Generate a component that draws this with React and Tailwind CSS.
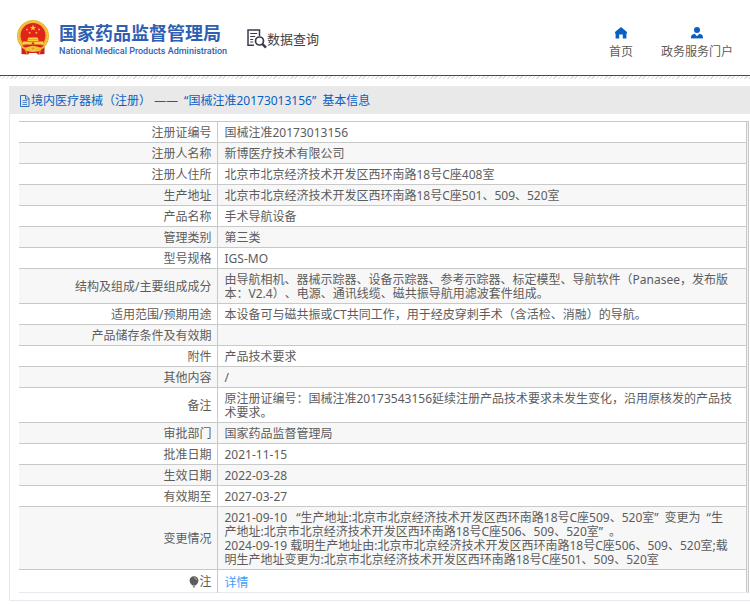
import React from 'react'

// \u2002 sets the curly quotes off from the characters next to them
const title = '境内医疗器械（注册） ——\u2002“国械注准20173013156”\u2002基本信息'

const rows = [
  { label: '注册证编号', value: '国械注准20173013156' },
  { label: '注册人名称', value: '新博医疗技术有限公司' },
  { label: '注册人住所', value: '北京市北京经济技术开发区西环南路18号C座408室' },
  { label: '生产地址', value: '北京市北京经济技术开发区西环南路18号C座501、509、520室' },
  { label: '产品名称', value: '手术导航设备' },
  { label: '管理类别', value: '第三类' },
  { label: '型号规格', value: 'IGS-MO' },
  {
    label: '结构及组成/主要组成成分',
    value: '由导航相机、器械示踪器、设备示踪器、参考示踪器、标定模型、导航软件（Panasee，发布版本：V2.4）、电源、通讯线缆、磁共振导航用滤波套件组成。',
  },
  { label: '适用范围/预期用途', value: '本设备可与磁共振或CT共同工作，用于经皮穿刺手术（含活检、消融）的导航。' },
  { label: '产品储存条件及有效期', value: '' },
  { label: '附件', value: '产品技术要求' },
  { label: '其他内容', value: '/' },
  { label: '备注', value: '原注册证编号：国械注准20173543156延续注册产品技术要求未发生变化，沿用原核发的产品技术要求。' },
  { label: '审批部门', value: '国家药品监督管理局' },
  { label: '批准日期', value: '2021-11-15' },
  { label: '生效日期', value: '2022-03-28' },
  { label: '有效期至', value: '2027-03-27' },
  {
    label: '变更情况',
    value:
      '2021-09-10 \u2002“生产地址:北京市北京经济技术开发区西环南路18号C座509、520室”\u2002变更为\u2002“生产地址:北京市北京经济技术开发区西环南路18号C座506、509、520室”\u2002。\n2024-09-19 载明生产地址由:北京市北京经济技术开发区西环南路18号C座506、509、520室;载明生产地址变更为:北京市北京经济技术开发区西环南路18号C座501、509、520室',
  },
]

const Emblem = () => (
  <svg width="32" height="35" viewBox="0 0 32 35" aria-hidden="true">
    <path d="M4.500 23 L4.500 34 L11 34.500 L12.500 33 L19.500 33 L21 34.500 L27.500 34 L27.500 23 Z" fill="#d2201c" />
    <circle cx="16" cy="16" r="16" fill="#e9b62f" />
    <circle cx="16" cy="16" r="14.400" fill="none" stroke="#f7d768" strokeWidth="1" strokeDasharray="2 1" />
    <circle cx="16" cy="15.500" r="12.400" fill="#e2231a" />
    <path d="M16 4.600l.8 2.300h2.400l-1.900 1.400.7 2.300-2-1.400-2 1.400.7-2.300-1.900-1.400h2.400z" fill="#f8cf3e" />
    <g fill="#f3b632">
      <circle cx="10" cy="9.500" r="1" />
      <circle cx="22" cy="9.500" r="1" />
      <circle cx="12.600" cy="12.800" r="1" />
      <circle cx="19.400" cy="12.800" r="1" />
    </g>
    <path d="M11.500 17.400h9l1 1.800h-11z M10.500 19.600h11v1.400h-11z M6 21.400h20v3H6z" fill="#f8cf3e" />
    <path d="M14.800 22.600h2.400v1.800h-2.400z" fill="#e2231a" />
    <path d="M5 25.200h22l-2.500 2.300h-17z" fill="#d2201c" />
    <path d="M8 28 Q16 24 24 28 L22 31.500 Q16 29.500 10 31.500 Z" fill="#f0c03a" />
    <circle cx="16" cy="28.500" r="2.800" fill="#f3c43c" />
    <circle cx="16" cy="28.500" r="1.200" fill="#e09a28" />
    <path d="M8 29l2 5M24 29l-2 5" stroke="#f0b63a" strokeWidth=".8" />
  </svg>
)

const QueryIcon = () => (
  <svg width="20" height="20" viewBox="0 0 20 20" fill="none" stroke="#3b3b4f" aria-hidden="true">
    <path d="M7 16.200H1V1h11.500v6" strokeWidth="1.500" />
    <path d="M3.200 4.500h7M3.200 7.500h5M3.200 10.500h3M3.200 13h3" strokeWidth="1" />
    <circle cx="12.500" cy="12" r="4" strokeWidth="1.700" />
    <path d="M15.500 15.200l3.500 3.500" strokeWidth="2.400" />
  </svg>
)

const HomeIcon = () => (
  <svg width="12" height="12" viewBox="0 0 12 12" fill="#0a5fc4" aria-hidden="true">
    <path d="M6 0L0 5v1.500h.6V11.500h3.600V7.500h3.600v4h3.600V6.500H12V5z" />
  </svg>
)

const UserIcon = () => (
  <svg width="12" height="12" viewBox="0 0 12 12" aria-hidden="true">
    <g fill="#0a5fc4">
      <circle cx="6" cy="3" r="3" />
      <path d="M0 11V10Q.4 7.200 3.600 6.700L6 9.200 8.400 6.700Q11.600 7.200 12 10v1z" />
    </g>
    <path d="M0 11h12v1H0z" fill="#9dbfe6" />
  </svg>
)

const FileIcon = () => (
  <svg width="12" height="12" viewBox="0 0 12 12" fill="none" stroke="#2c6fc2" aria-hidden="true">
    <path d="M1.500 .5h5.500l3 3v8h-8.500z M6.500 .5v3.500h3.500" />
    <path d="M3.500 5.500h4.500M3.500 7.500h4.500M3.500 9.500h4.500" strokeWidth=".8" />
  </svg>
)

const BulbIcon = () => (
  <svg width="10" height="12" viewBox="0 0 10 12" aria-hidden="true">
    <path d="M5 .3C2.300.3.600 2.200.600 4.500.600 7 2.600 8.800 3.500 9.400h3C7.400 8.800 9.400 7 9.400 4.500 9.400 2.200 7.700.3 5 .3z" fill="#5c5c5c" />
    <path d="M3.800 10.200h2.400l-.6 1.200H4.400z" fill="#5c5c5c" />
    <path d="M5.200 1.800c1.400 0 2.300.9 2.500 2.100" stroke="#d5d5d5" strokeWidth=".8" fill="none" />
  </svg>
)

const App = () => {
  return (
    <div className="bg-white text-[12px] leading-[14px] text-[#5c5c5c] font-['Noto_Sans','Noto_Sans_CJK_SC',sans-serif] [text-spacing-trim:space-all]" lang="zh-CN">
      <header className="flex items-center justify-between h-[76px] px-[17px] border-b border-[#0a57b0]">
        <div className="flex items-center">
          <a href="#home" className="flex items-center gap-2.5">
            <Emblem />
            <span className="flex flex-col pt-1 text-[#2f5fb3]">
              <span className="text-[18px] leading-[22px] font-bold">国家药品监督管理局</span>
              <span className="font-[Roboto] font-medium text-[9px] leading-[14px]">National Medical Products Administration</span>
            </span>
          </a>
          <a href="#query" className="flex items-center ml-5 pt-0.5 text-[13px] text-[#3f3f46]">
            <QueryIcon />
            <span>数据查询</span>
          </a>
        </div>
        <nav className="flex gap-7 pt-2.5">
          <a href="#home" className="flex flex-col items-center gap-1.5">
            <HomeIcon />
            <span>首页</span>
          </a>
          <a href="#portal" className="flex flex-col items-center gap-1.5">
            <UserIcon />
            <span>政务服务门户</span>
          </a>
        </nav>
      </header>
      <div className="h-[3px] bg-[repeating-linear-gradient(135deg,#dedede_0px,#dedede_1px,#ffffff_1px,#ffffff_3px)]"></div>

      <main className="mt-[7px] ml-[9px] border-l border-b border-[#e8e8ee]">
        <h1 className="flex items-center h-7 pt-0.5 pl-[9px] bg-[#e9e9e9] text-[#0a5fc4]">
          <FileIcon />
          <span>{title}</span>
        </h1>
        <div className="my-[7px] ml-[9px] mr-px pr-px border-t border-r border-[#c9c9c9] bg-[#f0f0f0]">
          <table className="w-full border-collapse bg-white border-r border-[#c9c9c9]">
            <tbody>
              {rows.map((row, index) => (
                <tr key={index} className="border-b border-[#c9c9c9] even:bg-[#f7f7f7]">
                  <th scope="row" className="w-[198px] h-5 pr-[5px] pt-1 pb-0.5 text-right font-normal border-r border-[#c9c9c9]">
                    {row.label}
                  </th>
                  <td className="pl-[7px] pr-3 pt-1 pb-0.5 whitespace-pre-line">{row.value}</td>
                </tr>
              ))}
              <tr className="border-b border-[#e8e8ee]">
                <th scope="row" className="h-[23px] pr-[5px] pt-0.5 font-normal border-r border-[#c9c9c9]">
                  <span className="flex items-center justify-end">
                    <BulbIcon />
                    注
                  </span>
                </th>
                <td className="pl-[7px] pt-1">
                  <a href="#detail" className="text-[#409eff]">详情</a>
                </td>
              </tr>
            </tbody>
          </table>
        </div>
      </main>
    </div>
  )
}

export default App
